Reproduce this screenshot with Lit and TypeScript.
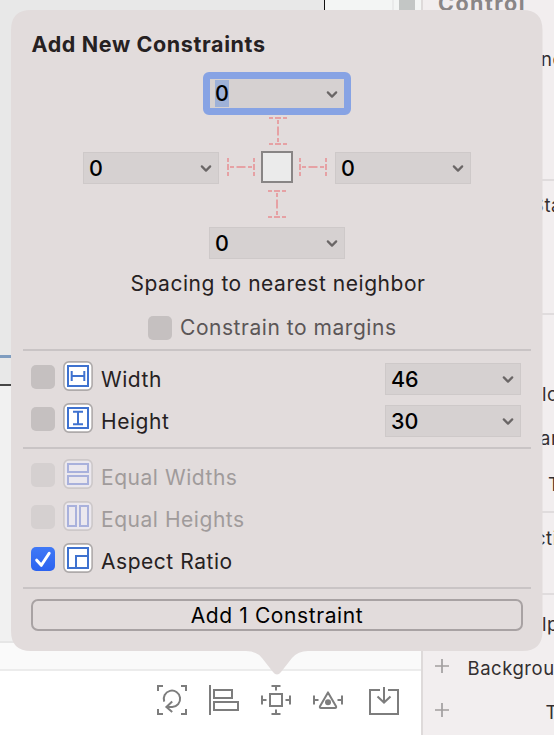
import { LitElement, html, css, svg } from "lit";
import { classMap } from "lit/directives/class-map.js";

const FONT = css`Inter, "Liberation Sans", sans-serif`;

/* Drop-down number field */
class ComboField extends LitElement {
  static properties = { value: { type: String }, focused: { type: Boolean } };
  declare value: string;
  declare focused: boolean;
  static styles = css`
    :host { display: block; width: 136px; height: 32px; font: 450 21.5px/32px ${FONT}; letter-spacing: 0; color: #000; }
    .field { box-sizing: border-box; height: 32px; display: flex; align-items: center; justify-content: space-between;
      padding: 0 6px 0 5px; background: #d6d1d1; border: 1px solid #cec9c9; }
    .focused { width: 148px; height: 43px; margin: -6px; border: 7px solid #87a3e4; border-radius: 6px; padding: 0 6px 0 5px; }
    .num { line-height: 27px; }
    .focused .num { background: #9eb1d8; }
    svg { display: block; }
  `;
  render() {
    return html`<div class=${classMap({ field: true, focused: !!this.focused })}>
      <span class="num">${this.value}</span>
      <svg width="12" height="10" viewBox="0 0 12 10"><path d="M1.8 3.4 6 7.6l4.2-4.2" fill="none" stroke="#6a6666" stroke-width="2.2" stroke-linecap="round" stroke-linejoin="round"/></svg>
    </div>`;
  }
}
customElements.define("combo-field", ComboField);

/* Square tick box */
class TickBox extends LitElement {
  static properties = { checked: { type: Boolean }, disabled: { type: Boolean } };
  declare checked: boolean;
  declare disabled: boolean;
  static styles = css`
    :host { display: block; width: 24px; height: 24px; }
    .box { width: 24px; height: 24px; border-radius: 5px; background: #c5c0c0; }
    .disabled { background: #d5d0d0; }
    .checked { background: linear-gradient(#4079f6, #2b62f0); }
    svg { display: block; }
  `;
  render() {
    return html`<div class=${classMap({ box: true, checked: !!this.checked, disabled: !!this.disabled })}>
      ${this.checked ? html`<svg width="24" height="24"><path d="M5.7 13.2 10.3 18.3 18.2 6.3" fill="none" stroke="#fff" stroke-width="3" stroke-linecap="round" stroke-linejoin="round"/></svg>` : ""}
    </div>`;
  }
}
customElements.define("tick-box", TickBox);

const GLYPHS: Record<string, unknown> = {
  width: svg`<path d="M5 5h20v20H5zM8.7 10v10M21.3 10v10M8.7 15h12.6"/>`,
  height: svg`<path d="M5 5h20v20H5zM10 8.7h10M10 21.3h10M15 8.7v12.6"/>`,
  equalWidths: svg`<path d="M5 5h20v8H5zM5 17h20v8H5z"/>`,
  equalHeights: svg`<path d="M5 5h8v20H5zM17 5h8v20h-8z"/>`,
  aspect: svg`<path d="M5 5h20v20H5zM25 13H13v12"/>`,
};

const TOOLS = [
  svg`<path d="M1 6V1h5M24 1h5v5M29 24v5h-5M6 29H1v-5"/><path d="M7.2 16.6A8.2 8.2 0 1 1 15.2 22H10M15.2 16.6 9.4 22l5.8 5"/>`,
  svg`<path d="M1 0v30M5 5h18v8H5zM5 17h24v8H5z"/>`,
  svg`<path d="M9 9h12v12H9zM10.5 1h9M15 1v4.5M10.5 29h9M15 29v-4.5M1 10.5v9M1 15h4.5M29 10.5v9M29 15h-4.5"/>`,
  svg`<path d="M15 7.4 23 21.2q.7 1.8-1 1.8H8q-1.7 0-1-1.8zM1 10.5v9M1 15h4.5M29 10.5v9M29 15h-4.5" stroke-linejoin="round"/><circle cx="15" cy="17.3" r="3" fill="#7d7d7d" stroke="none"/>`,
  svg`<path d="M11 5H1v24h28V5H19M15 2v15M8.5 11.5 15 17.6l6.5-6.1"/>`,
];

class AppRoot extends LitElement {
  static styles = css`
    :host { display: block; position: relative; width: 554px; height: 735px; overflow: hidden; font: 440 21px/30px ${FONT}; letter-spacing: .54px; color: #262122; }
    svg { display: block; flex: none; }

    .window { display: flex; height: 735px; }
    .editor { width: 421px; display: flex; flex-direction: column; }
    .canvas { height: 355px; display: flex; background: #e8e8e8; }
    .view { width: 324px; border-right: 1px solid #111; }
    .gutter { flex: 1; display: flex; background: #f3f5f4; }
    .gutter .space { width: 67px; border-right: 2px solid #e9eaea; }
    .gutter .thumb { width: 16px; margin-left: 5px; background: #c3c6c5; }
    .guide { height: 3px; background: #7f9dc0; }
    .band { height: 26px; background: #e8e8e8; border-bottom: 2px solid #464646; }
    .below { height: 255px; background: #f1f1f1; border-bottom: 2px solid #e6e6e6; }
    .strip { height: 26px; background: #fafafa; border-bottom: 2px solid #ececec; }
    .tools { flex: 1; background: #fff; display: flex; align-items: flex-start; gap: 22px; padding: 14px 0 0 157px; }
    .tools svg:last-child { margin-left: 4px; }
    .tools svg { fill: none; stroke: #7d7d7d; stroke-width: 2; }

    .inspector { box-sizing: border-box; width: 133px; border-left: 2px solid #dedada; background: #f2eeef; overflow: hidden; font-size: 18.5px; color: #332e2f; }
    .section { box-sizing: border-box; display: flex; align-items: center; white-space: nowrap; }
    .line { border-bottom: 2px solid #e0dcdd; }
    .head { height: 36px; padding-left: 15px; font-weight: 700; font-size: 21.5px; letter-spacing: 1.5px; color: #8a8687; align-items: flex-start; line-height: 7px; }
    .name { height: 45px; padding-left: 118px; }
    .blank { height: 100px; }
    .state { height: 48px; padding-left: 109px; }
    .spacer { height: 86px; }
    .colors { height: 158px; padding-top: 57px; box-sizing: border-box; }
    .tint { height: 40px; padding: 0 0 16px 125px; }
    .action { height: 49px; padding-left: 112px; }
    .gap { height: 33px; }
    .view-props { padding-top: 7px; }
    .prop { display: flex; align-items: center; height: 44px; white-space: nowrap; }
    .plus { stroke: #a29e9f; stroke-width: 1.7; margin: -4px 0 0 12px; }

    .popover { position: absolute; left: 11px; top: 10px; width: 532px; height: 665px; z-index: 1; }
    .shape { position: absolute; left: 0; top: 0; z-index: -1; }
    .body { display: flex; flex-direction: column; padding: 0 12px; }
    .title { font-size: 21.5px; font-weight: 700; letter-spacing: .62px; line-height: 30px; padding: 19px 0 0 8.5px; height: 20px; }
    .spacing { display: grid; grid-template-columns: 136px 42px 32px 42px 136px; grid-template-rows: 32px 42px 32px 43px 32px; align-items: center; justify-items: center; width: 388px; margin: 29px 0 0 60px; }
    .wide { grid-column: 1 / -1; }
    .pin { width: 32px; height: 32px; box-sizing: border-box; border: 2px solid #888585; background: #ebebeb; margin-top: -2px; }
    .strut { fill: none; stroke: #e6a1a4; stroke-width: 2; }
    .strut.top { margin-left: 2px; }
    .strut.bottom { margin-top: -4px; }
    .strut.left { margin: -2px 0 0 2px; }
    .strut.right { margin: -2px 2px 0 0; }
    .caption { text-align: center; padding-top: 10px; height: 30px; margin-left: 2px; }
    .margins { display: flex; align-items: center; gap: 8px; height: 30px; padding: 14px 0 6px 125px; color: #5b5657; }
    .rule { height: 2px; background: #c9c4c5; }
    .row { display: flex; align-items: center; height: 42px; padding: 0 10px 0 8px; }
    .row tick-box { margin-top: -4px; }
    .row .icon { margin: -6px 8px 0 8px; }
    .row .label { flex: 1; padding-top: 2px; }
    .frame { fill: #fff; stroke: #aeaaaa; stroke-width: 1.6; }
    .glyph { fill: none; stroke: #3f72cf; stroke-width: 2; }
    .off .frame { fill: #ebe8ee; stroke: #cdc8c9; }
    .off .glyph { stroke: #a9b1dc; }
    .off .label { color: #a09b9b; }
    .sizes { padding: 7px 0 5px; }
    .ratios { padding: 7px 0 5px; }
    .add { box-sizing: border-box; height: 32px; margin: 10px 8px 0; border: 2px solid #a8a2a3; border-radius: 7px; text-align: center; line-height: 29px; color: #000; letter-spacing: .6px; }
  `;

  strut(side: "top" | "bottom" | "left" | "right") {
    return side === "top" || side === "bottom"
      ? html`<svg class="strut ${side}" width="18" height="28"><path d="M0 1h18M0 27h18" stroke-dasharray="4 2 6 2"/><path d="M9 3v22" stroke-dasharray="4 2.5 9 2.5"/></svg>`
      : html`<svg class="strut ${side}" width="28" height="18"><path d="M1 0v18M27 0v18" stroke-dasharray="4 2 6 2"/><path d="M3 9h22" stroke-dasharray="4 2.5 9 2.5"/></svg>`;
  }

  row(name: string, label: string, state: { off?: boolean; on?: boolean; value?: string } = {}) {
    return html`<div class=${classMap({ row: true, off: !!state.off })}>
      <tick-box ?checked=${state.on} ?disabled=${state.off}></tick-box>
      <svg class="icon" width="30" height="30"><rect class="frame" x=".9" y=".9" width="28.2" height="28.2" rx="5"/><g class="glyph">${GLYPHS[name]}</g></svg>
      <span class="label">${label}</span>
      ${state.value ? html`<combo-field value=${state.value}></combo-field>` : ""}
    </div>`;
  }

  prop(text: string, x: number, plus = false) {
    return html`<div class="prop">
      ${plus ? html`<svg class="plus" width="14" height="14"><path d="M7 0v14M0 7h14"/></svg>` : ""}
      <span style="padding-left:${x}px">${text}</span>
    </div>`;
  }

  render() {
    return html`
      <div class="window">
        <div class="editor">
          <div class="canvas"><div class="view"></div><div class="gutter"><div class="space"></div><div class="thumb"></div></div></div>
          <div class="guide"></div><div class="band"></div><div class="below"></div><div class="strip"></div>
          <div class="tools">${TOOLS.map((t) => html`<svg width="30" height="30">${t}</svg>`)}</div>
        </div>
        <div class="inspector">
          <div class="section head">Control</div>
          <div class="section name">ne</div>
          <div class="section line blank"></div>
          <div class="section state">State</div>
          <div class="section line spacer"></div>
          <div class="colors">${this.prop("lor", 119)}${this.prop("an", 117)}</div>
          <div class="section line tint">Ti</div>
          <div class="section action">ction</div>
          <div class="section line gap"></div>
          <div class="view-props">${this.prop("lpha", 119)}${this.prop("Background", 18.5, true)}${this.prop("Tint", 96.5, true)}</div>
        </div>
      </div>
      <div class="popover">
        <svg class="shape" width="532" height="665"><path fill="#e2dcdc" d="M20 0H511.5Q531.5 0 531.5 20V621Q531.5 641 511.5 641H297Q287 641 281 648L270 662Q266 667 262 662L251 648Q245 641 235 641H20Q0 641 0 621V20Q0 0 20 0Z"/></svg>
        <div class="body">
          <div class="title">Add New Constraints</div>
          <div class="spacing">
            <combo-field class="wide" value="0" focused></combo-field>
            <div class="wide">${this.strut("top")}</div>
            <combo-field value="0"></combo-field>
            ${this.strut("left")}
            <div class="pin"></div>
            ${this.strut("right")}
            <combo-field value="0"></combo-field>
            <div class="wide">${this.strut("bottom")}</div>
            <combo-field class="wide" value="0"></combo-field>
          </div>
          <div class="caption">Spacing to nearest neighbor</div>
          <div class="margins"><tick-box></tick-box><span>Constrain to margins</span></div>
          <div class="rule"></div>
          <div class="sizes">
            ${this.row("width", "Width", { value: "46" })}
            ${this.row("height", "Height", { value: "30" })}
          </div>
          <div class="rule"></div>
          <div class="ratios">
            ${this.row("equalWidths", "Equal Widths", { off: true })}
            ${this.row("equalHeights", "Equal Heights", { off: true })}
            ${this.row("aspect", "Aspect Ratio", { on: true })}
          </div>
          <div class="rule"></div>
          <div class="add">Add 1 Constraint</div>
        </div>
      </div>`;
  }
}
customElements.define("app-root", AppRoot);
